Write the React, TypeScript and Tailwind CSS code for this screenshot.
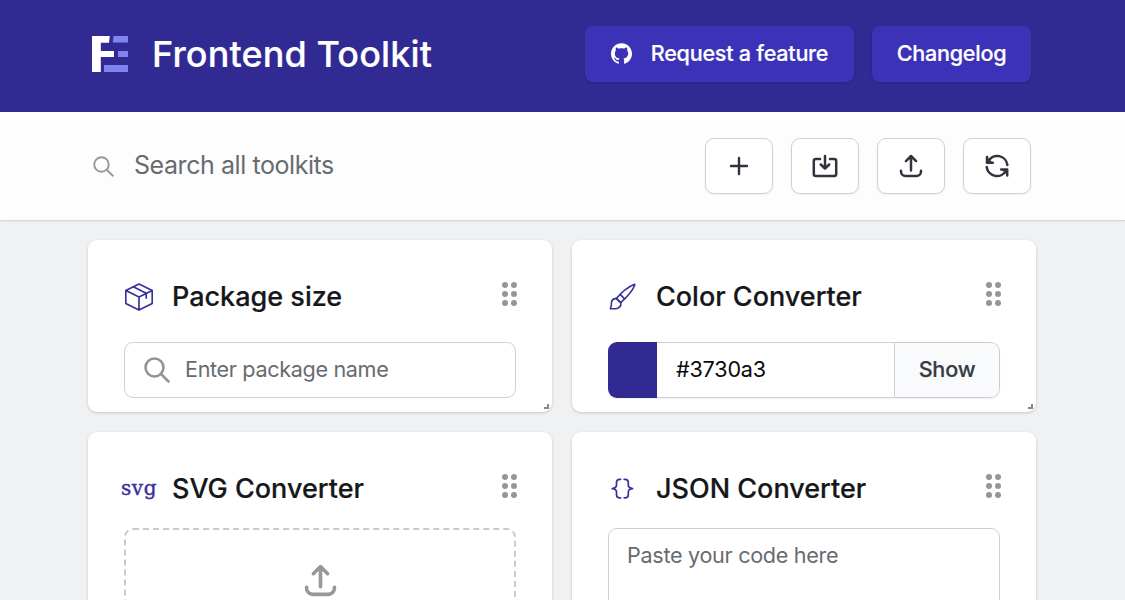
import React from "react";

const GithubIcon = () => (
  <svg viewBox="0 0 24 24" className="size-[21px]" fill="currentColor">
    <path d="M12 .297c-6.63 0-12 5.373-12 12 0 5.303 3.438 9.8 8.205 11.385.6.113.82-.258.82-.577 0-.285-.01-1.04-.015-2.04-3.338.724-4.042-1.61-4.042-1.61C4.422 18.07 3.633 17.7 3.633 17.7c-1.087-.744.084-.729.084-.729 1.205.084 1.838 1.236 1.838 1.236 1.07 1.835 2.809 1.305 3.495.998.108-.776.417-1.305.76-1.605-2.665-.3-5.466-1.332-5.466-5.93 0-1.31.465-2.38 1.235-3.22-.135-.303-.54-1.523.105-3.176 0 0 1.005-.322 3.3 1.23.96-.267 1.98-.399 3-.405 1.02.006 2.04.138 3 .405 2.28-1.552 3.285-1.23 3.285-1.23.645 1.653.24 2.873.12 3.176.765.84 1.23 1.91 1.23 3.22 0 4.61-2.805 5.625-5.475 5.92.42.36.81 1.096.81 2.22 0 1.606-.015 2.896-.015 3.286 0 .315.21.69.825.57C20.565 22.092 24 17.592 24 12.297c0-6.627-5.373-12-12-12" />
  </svg>
);

const SearchIcon = ({ className, width }: { className: string; width: number }) => (
  <svg viewBox="0 0 26 26" className={className} fill="none" stroke="currentColor" strokeWidth={width} strokeLinecap="round">
    <circle cx="10.500" cy="10.500" r="9" />
    <path d="M17 17l7.500 7.500" />
  </svg>
);

const stroke = {
  fill: "none",
  stroke: "currentColor",
  strokeLinecap: "round" as const,
  strokeLinejoin: "round" as const,
};

const PlusIcon = () => (
  <svg viewBox="0 0 28 28" className="size-7" {...stroke} strokeWidth="2.400">
    <path d="M14 6v16M6 14h16" />
  </svg>
);

const ImportIcon = () => (
  <svg viewBox="0 0 28 28" className="size-7" {...stroke} strokeWidth="2.500">
    <path d="M9 7H4.800a2 2 0 0 0-2 2v13a2 2 0 0 0 2 2h18.400a2 2 0 0 0 2-2V9a2 2 0 0 0-2-2H19" />
    <path d="M14 4v12.500M9.800 12.500l4.200 4.200 4.200-4.200" />
  </svg>
);

const UploadIcon = ({ className, width }: { className: string; width: number }) => (
  <svg viewBox="0 0 28 28" className={className} {...stroke} strokeWidth={width}>
    <path d="M14 18.500V4M8.900 9.100L14 4l5.100 5.100" />
    <path d="M4 18.800v.7a4.500 4.500 0 0 0 4.500 4.500h11a4.500 4.500 0 0 0 4.500-4.500v-.7" />
  </svg>
);

const RefreshIcon = () => (
  <svg viewBox="0 0 28 28" className="size-7" {...stroke} strokeWidth="2.500">
    <path d="M5.200 9.200A10.300 10.300 0 0 1 24.400 13M3.700 15A10.300 10.300 0 0 0 22.900 18.800" />
    <path d="M4 5v5.700h5.800M18.200 17.400H24.200V23.500" />
    <path d="M4.200 6v4.500h4.500zM24 22v-4.500h-4.500z" fill="currentColor" strokeWidth="1" />
  </svg>
);

const BoxIcon = () => (
  <svg viewBox="0 0 28 28" className="ml-px size-7" {...stroke} strokeWidth="1.650">
    <path d="M14 .9l13.200 6.500v13.200L14 27.100.8 20.600V7.400zM.8 7.400L14 14l13.200-6.600M14 14v13" />
    <path d="M8.300 3.800l12.900 6.500v4.900" />
  </svg>
);

const BrushIcon = () => (
  <svg viewBox="0 0 28 28" className="size-7" {...stroke} strokeWidth="1.600">
    <path d="M8.300 15.400C13.800 9 19.800 4 25.900 1.400c.7-.3 1.100.1.8.8C24.300 8.200 19 14 12.700 19.700z" />
    <path d="M12.400 11.600l4.200 4.300M8.300 15.400c-3.300.3-5 2.200-4.900 5 .1 2.100-.1 3.400-1 5.300 2.600.2 5.500.3 7.500-.5 2.300-1 3.300-3 2.800-5.500z" />
  </svg>
);

const BracesIcon = () => (
  <svg viewBox="0 0 28 28" className="size-7" {...stroke} strokeWidth="1.700">
    <path d="M12.600 4.300h-.8C9.700 4.300 8.500 5.300 8.500 7.400v2.700c0 2.200-1.200 3.200-4.300 3.500 3.100.3 4.300 1.400 4.300 3.500v2.700c0 2.100 1.200 3.100 3.300 3.100h.8" />
    <path d="M16.200 4.300h.8c2.100 0 3.300 1 3.300 3.100v2.700c0 2.200 1.200 3.200 4.300 3.500-3.100.3-4.300 1.400-4.300 3.500v2.700c0 2.100-1.200 3.100-3.300 3.100h-.8" />
  </svg>
);

const Logo = () => (
  <svg viewBox="0 0 36 36" className="size-9">
    <path fill="#fff" d="M0 0h17.800l-.8 6.800H8.800V15H22v6H8.800v15H0z" />
    <path fill="#7f85ee" d="M21.500 0H36v6.500H20.800zM26 15h10v6H26zM12 29h24v7H12z" />
  </svg>
);

const DragHandle = () => (
  <div className="mt-[5px] grid grid-cols-2 gap-[3px] text-[#949698]">
    {[0, 1, 2, 3, 4, 5].map((dot) => (
      <span key={dot} className="size-1.5 rounded-full bg-current" />
    ))}
  </div>
);

type CardProps = { icon: React.ReactNode; title: string; children: React.ReactNode; className: string };

const Card = ({ icon, title, children, className }: CardProps) => (
  <section className={`relative flex flex-col rounded-[9px] bg-white px-9 shadow-[0_1px_3px_rgba(0,0,0,0.18)] ${className}`}>
    <header className="flex items-start justify-between pt-[37px]">
      <div className="flex h-10 items-center">
        <span className="flex w-12 shrink-0 items-center text-[#37309c]">{icon}</span>
        <h2 className="text-[27px] font-medium text-[#15171b] [-webkit-text-stroke:0.2px]">{title}</h2>
      </div>
      <div className="-mr-px">
        <DragHandle />
      </div>
    </header>
    {children}
  </section>
);

const ResizeCorner = () => (
  <span className="absolute bottom-[3px] right-[3px] size-[5px] border-b-2 border-r-2 border-[#858789]" />
);

const toolButton =
  "flex h-14 w-[68px] items-center justify-center rounded-[9px] border border-[#d0d1d2] bg-white text-[#30353d] shadow-[0_1px_2px_rgba(0,0,0,0.06)]";
const headerButton =
  "flex h-14 items-center justify-center rounded-[8px] bg-[#3c32b8] pb-0.5 text-[21.6px] font-medium tracking-[-0.26px] text-white [-webkit-text-stroke:0.2px] shadow-sm";

export default function App() {
  return (
    <div className="h-[600px] overflow-hidden bg-[#f0f1f3] font-[Inter,sans-serif]">
      <header className="flex h-28 items-center justify-between bg-[#312a92] pl-[92px] pr-[94px] pb-1">
        <div className="flex items-center gap-6">
          <Logo />
          <h1 className="text-[36px] font-medium tracking-[0.12px] text-white [-webkit-text-stroke:0.2px]">Frontend Toolkit</h1>
        </div>
        <div className="flex gap-[18px]">
          <button className={`${headerButton} w-[269px] gap-[19px]`}>
            <GithubIcon />
            Request a feature
          </button>
          <button className={`${headerButton} w-[159px]`}>Changelog</button>
        </div>
      </header>

      <div className="flex h-[109px] items-center justify-between border-b border-[#d9dbdc] bg-[#fdfdfd] pb-px pl-[93px] pr-[94px] shadow-[0_1px_2px_rgba(0,0,0,0.06)]">
        <label className="flex items-center gap-5 text-[#96999b]">
          <SearchIcon className="mt-px size-[21px]" width={2.4} />
          <input
            className="w-[400px] bg-transparent text-[25px] tracking-[-0.43px] outline-none placeholder:text-[#686b70]"
            placeholder="Search all toolkits"
          />
        </label>
        <div className="flex gap-[18px]">
          <button className={toolButton} aria-label="Add"><PlusIcon /></button>
          <button className={toolButton} aria-label="Import"><ImportIcon /></button>
          <button className={toolButton} aria-label="Export"><UploadIcon className="size-7" width={2.5} /></button>
          <button className={toolButton} aria-label="Reset"><RefreshIcon /></button>
        </div>
      </div>

      <main className="grid grid-cols-2 gap-5 pl-[88px] pr-[89px] pt-[19px]">
        <Card className="h-[172px]" icon={<BoxIcon />} title="Package size">
          <label className="mt-[25px] flex h-14 items-center gap-[15px] rounded-[9px] border border-[#cfd0d1] pl-[19px] text-[#929597]">
            <SearchIcon className="size-[26px]" width={2.6} />
            <input
              className="w-[300px] bg-transparent pb-0.5 text-[21.6px] tracking-[-0.34px] outline-none placeholder:text-[#686b70]"
              placeholder="Enter package name"
            />
          </label>
          <ResizeCorner />
        </Card>

        <Card className="h-[172px]" icon={<BrushIcon />} title="Color Converter">
          <div className="mt-[25px] flex h-14 overflow-hidden rounded-[9px] shadow-[0_1px_2px_rgba(0,0,0,0.06)]">
            <span className="w-[49px] shrink-0 bg-[#312a92]" />
            <input
              className="min-w-0 flex-1 border-y border-[#cfd0d1] pb-0.5 pl-[19px] text-[21.6px] tracking-[-0.2px] text-[#0a0a0a] outline-none"
              defaultValue="#3730a3"
            />
            <button className="w-[106px] rounded-r-[9px] border border-[#cccdd0] bg-[#f8fafb] pb-0.5 text-[21.6px] font-medium tracking-[-0.2px] text-[#373b43] [-webkit-text-stroke:0.2px]">
              Show
            </button>
          </div>
          <ResizeCorner />
        </Card>

        <Card
          className="h-[300px]"
          icon={
            <span className="-ml-[3px] -mt-0.5 font-['DejaVu_Serif',serif] text-[20px] tracking-[0.6px] [-webkit-text-stroke:0.4px]">
              svg
            </span>
          }
          title="SVG Converter"
        >
          <div className="mt-[19px] flex h-[200px] justify-center rounded-[9px] border-2 border-dashed border-[#c9cacb] pt-[31px] text-[#96999b]">
            <UploadIcon className="size-[39px]" width={2.6} />
          </div>
        </Card>

        <Card className="h-[300px]" icon={<BracesIcon />} title="JSON Converter">
          <textarea
            className="mt-[19px] h-[200px] resize-none rounded-[9px] border border-[#cfd0d1] px-[18px] py-[10px] text-[21.6px] leading-[33px] tracking-[-0.3px] outline-none placeholder:text-[#686b70]"
            placeholder="Paste your code here"
          />
        </Card>
      </main>
    </div>
  );
}
